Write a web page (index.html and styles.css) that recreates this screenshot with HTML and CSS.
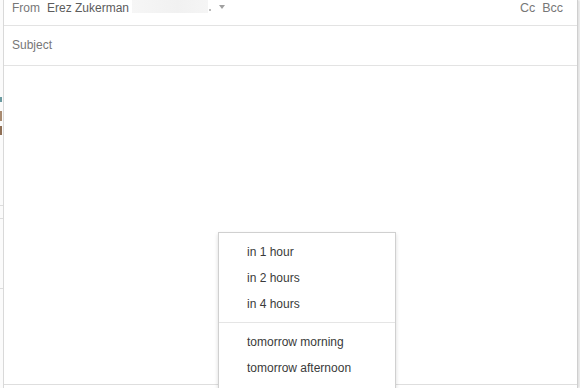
FILE: index.html
```html
<!DOCTYPE html>
<html lang="en">
  <head>
    <meta charset="UTF-8" />
    <title>Compose</title>
    <link rel="stylesheet" href="styles.css">
  </head>
  <body>
    <div class="page">
      <div class="backdrop">
        <span class="mark mark-teal"></span>
        <span class="mark mark-brown"></span>
        <span class="mark mark-brown2"></span>
        <span class="rule rule-1"></span>
        <span class="rule rule-2"></span>
        <span class="rule rule-3"></span>
      </div>

      <div class="compose">
        <div class="row from-row">
          <div class="from">
            <span class="label">From</span>
            <span class="sender">Erez Zukerman</span>
            <span class="blurred"></span>
            <span class="dot"></span>
            <span class="caret"></span>
          </div>
          <div class="recipients">
            <span>Cc</span>
            <span>Bcc</span>
          </div>
        </div>

        <div class="row subject-row">
          <span class="placeholder">Subject</span>
        </div>

        <div class="body-area">
          <ul class="menu">
            <li>in 1 hour</li>
            <li>in 2 hours</li>
            <li>in 4 hours</li>
            <li class="separator"></li>
            <li>tomorrow morning</li>
            <li>tomorrow afternoon</li>
          </ul>
        </div>
      </div>
    </div>
  </body>
</html>
```

FILE: styles.css
```css
html, body {
  margin: 0;
  padding: 0;
  background: #fff;
}
body {
  font-family: "Liberation Sans", Arial, sans-serif;
  font-size: 12px;
  line-height: 16px;
  color: #333;
  overflow: hidden;
}
.page {
  display: flex;
  width: 580px;
  height: 388px;
  overflow: hidden;
}

/* strip of the mail list peeking out at the left */
.backdrop {
  position: relative;
  width: 3px;
  flex: none;
  background: #fbfbfb;
}
.mark, .rule {
  position: absolute;
  left: 0;
}
.mark-teal {
  top: 97px;
  width: 2px;
  height: 5px;
  background: #6a9aa0;
}
.mark-brown {
  top: 111px;
  width: 2px;
  height: 10px;
  background: #a88a70;
}
.mark-brown2 {
  top: 126px;
  width: 2px;
  height: 9px;
  background: #8f6f55;
}
.rule {
  width: 3px;
  height: 1px;
  background: #ddd;
}
.rule-1 { top: 205px; }
.rule-2 { top: 218px; }
.rule-3 { top: 288px; }

.compose {
  width: 573px;
  flex: none;
  border-left: 1px solid #d9d9d9;
  border-right: 1px solid #cfcfcf;
  box-shadow: 2px 0 2px rgba(0, 0, 0, 0.12);
  display: flex;
  flex-direction: column;
  background: #fff;
}
.row {
  display: flex;
  align-items: flex-start;
  border-bottom: 1px solid #e3e3e3;
  padding-left: 8px;
}
.from-row {
  height: 25px;
  justify-content: space-between;
  padding-right: 14px;
}
.from {
  display: flex;
  align-items: center;
  height: 16px;
}
.label {
  color: #777;
}
.sender {
  color: #5c5c5c;
  margin-left: 7px;
}
.blurred {
  width: 76px;
  height: 14px;
  margin: -4px 0 0 3px;
  background: linear-gradient(90deg, #f6f6f6, #f1f1f1 60%, #f5f5f5);
}
.dot {
  width: 2px;
  height: 2px;
  margin: 3px 0 0 1px;
  background: #bbb;
}
.caret {
  width: 0;
  height: 0;
  margin: -2px 0 0 8px;
  border-left: 3px solid transparent;
  border-right: 3px solid transparent;
  border-top: 4px solid #a0a0a0;
}
.recipients {
  display: flex;
  gap: 7px;
  color: #777;
  font-size: 12.5px;
}
.subject-row {
  padding-top: 11px;
  height: 28px;
}
.placeholder {
  color: #777;
}

.body-area {
  position: relative;
  height: 318px;
  border-bottom: 1px solid #dedede;
}
.menu {
  position: absolute;
  left: 214px;
  top: 166px;
  width: 176px;
  margin: 0;
  padding: 6px 0 20px;
  list-style: none;
  background: #fff;
  border: 1px solid #d0d0d0;
  box-shadow: 0 2px 4px rgba(0, 0, 0, 0.15);
  color: #3a3a3a;
}
.menu li {
  padding: 5px 0 5px 28px;
}
.menu .separator {
  padding: 0;
  height: 1px;
  margin: 5px 0 6px;
  background: #e5e5e5;
}
```
